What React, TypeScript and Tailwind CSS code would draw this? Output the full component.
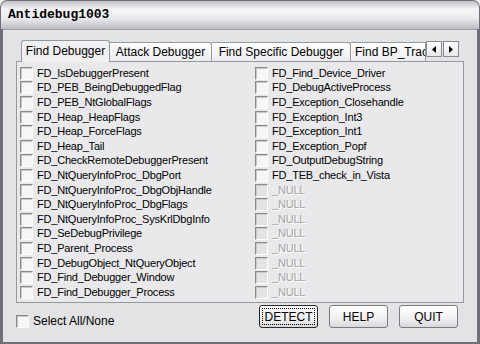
import React from "react";

const left = [
  "FD_IsDebuggerPresent",
  "FD_PEB_BeingDebuggedFlag",
  "FD_PEB_NtGlobalFlags",
  "FD_Heap_HeapFlags",
  "FD_Heap_ForceFlags",
  "FD_Heap_Tail",
  "FD_CheckRemoteDebuggerPresent",
  "FD_NtQueryInfoProc_DbgPort",
  "FD_NtQueryInfoProc_DbgObjHandle",
  "FD_NtQueryInfoProc_DbgFlags",
  "FD_NtQueryInfoProc_SysKrlDbgInfo",
  "FD_SeDebugPrivilege",
  "FD_Parent_Process",
  "FD_DebugObject_NtQueryObject",
  "FD_Find_Debugger_Window",
  "FD_Find_Debugger_Process",
];

const right = [
  "FD_Find_Device_Driver",
  "FD_DebugActiveProcess",
  "FD_Exception_Closehandle",
  "FD_Exception_Int3",
  "FD_Exception_Int1",
  "FD_Exception_Popf",
  "FD_OutputDebugString",
  "FD_TEB_check_in_Vista",
];

function Box({ disabled }: { disabled?: boolean }) {
  return (
    <div
      className={`w-[13px] h-[13px] shrink-0 border-t-[1px] border-l-[1px] border-b-[1px] border-r-[1px] border-t-[#8a8a8a] border-l-[#8a8a8a] border-b-white border-r-white ${
        disabled ? "bg-[#e4e4e4]" : "bg-[#f6f6f6]"
      }`}
    >
      <div className="w-full h-full border-t-[1px] border-l-[1px] border-t-[#c8c8c8] border-l-[#c8c8c8]" />
    </div>
  );
}

function Row({ label, disabled }: { label: string; disabled?: boolean }) {
  return (
    <div className="h-[14.6px] flex items-center gap-[4px]">
      <Box disabled={disabled} />
      <span
        className={`text-[11px] leading-none whitespace-nowrap tracking-[-0.2px] ${
          disabled ? "text-[#a4a4a4] [text-shadow:1px_1px_0_#ffffff]" : "text-black"
        }`}
      >
        {label}
      </span>
    </div>
  );
}

function Btn({ label, focus }: { label: string; focus?: boolean }) {
  return (
    <div
      className={`w-[59px] h-[23px] rounded-[3px] border flex items-center justify-center ${
        focus ? "border-[#2a2a2a]" : "border-[#7a7a80]"
      } bg-[linear-gradient(#ffffff,#f0f0f0_60%,#d8d8dc)]`}
    >
      <div
        className={`flex items-center justify-center text-[12px] leading-none px-[2px] h-[17px] ${
          focus ? "border border-dotted border-black w-[53px]" : ""
        }`}
      >
        {label}
      </div>
    </div>
  );
}

export default function App() {
  return (
    <div
      className="w-[480px] h-[344px] flex flex-col bg-[#6f6f78] rounded-t-[7px] overflow-hidden"
      style={{ fontFamily: '"Liberation Sans", Arial, sans-serif' }}
    >
      <div className="h-[28px] shrink-0 flex items-center pl-[7px] mx-[1px] mt-[1px] rounded-t-[6px] bg-[linear-gradient(#c0c0ca,#f6f6f8_30%,#ececf0_60%,#bcbcc6)]">
        <span
          className="text-[13px] font-bold text-black"
          style={{ fontFamily: '"Liberation Mono", "Courier New", monospace' }}
        >
          Antidebug1003
        </span>
      </div>
      <div className="flex-1 mx-[3px] mb-[2px] bg-[#e3e3e6] flex flex-col border-t-[1px] border-[#a0a0a8]">
        <div className="pl-[13px] pr-[13px] pt-[9px] flex flex-col">
          {/* tab strip */}
          <div className="flex items-end h-[22px] relative z-10">
            <div className="w-[5px]" />
            <div className="h-[22px] w-[89px] bg-[#f0f0f2] border border-b-0 border-[#919b9c] rounded-t-[3px] flex items-center justify-center text-[12px] text-black mb-[-1px]">
              <span className="mt-[-2px]">Find Debugger</span>
            </div>
            <div className="h-[19px] w-[102px] bg-[linear-gradient(#ffffff,#ececf0)] border border-b-0 border-l-0 border-[#919b9c] rounded-tr-[3px] flex items-center justify-center text-[12px] text-black">
              Attack Debugger
            </div>
            <div className="h-[19px] w-[139px] bg-[linear-gradient(#ffffff,#ececf0)] border border-b-0 border-l-0 border-[#919b9c] rounded-tr-[3px] flex items-center justify-center text-[12px] text-black">
              Find Specific Debugger
            </div>
            <div className="h-[19px] w-[75px] bg-[linear-gradient(#ffffff,#ececf0)] border border-b-0 border-l-0 border-[#919b9c] flex items-center pl-[4px] text-[12px] text-black overflow-hidden whitespace-nowrap">
              Find BP_Trac
            </div>
            <div className="flex self-start mt-[2px] gap-[1px]">
              <div className="w-[16px] h-[16px] bg-[linear-gradient(#ffffff,#e6e6ea)] border border-[#8a8a90] flex items-center justify-center">
                <svg width="4" height="7" viewBox="0 0 4 7">
                  <path d="M4 0 L0 3.5 L4 7 Z" fill="#000" />
                </svg>
              </div>
              <div className="w-[16px] h-[16px] bg-[linear-gradient(#ffffff,#e6e6ea)] border border-[#8a8a90] flex items-center justify-center">
                <svg width="4" height="7" viewBox="0 0 4 7">
                  <path d="M0 0 L4 3.5 L0 7 Z" fill="#000" />
                </svg>
              </div>
            </div>
          </div>
          {/* panel */}
          <div className="h-[242px] w-[448px] border border-[#919b9c] bg-[#e9e9ec] flex pt-[4px] pl-[3px]">
            <div className="w-[235px] flex flex-col">
              {left.map((l) => (
                <Row key={l} label={l} />
              ))}
            </div>
            <div className="flex flex-col">
              {right.map((l) => (
                <Row key={l} label={l} />
              ))}
              {Array.from({ length: 8 }).map((_, i) => (
                <Row key={i} label="_NULL" disabled />
              ))}
            </div>
          </div>
        </div>
        {/* bottom */}
        <div className="flex items-center pl-[13px] pr-[19px] mt-[2px]">
          <div className="flex items-center gap-[4px] mt-[9px]">
            <Box />
            <span className="text-[12px] text-black leading-none">Select All/None</span>
          </div>
          <div className="flex-1" />
          <div className="flex gap-[11px]">
            <Btn label="DETECT" focus />
            <Btn label="HELP" />
            <Btn label="QUIT" />
          </div>
        </div>
      </div>
    </div>
  );
}
